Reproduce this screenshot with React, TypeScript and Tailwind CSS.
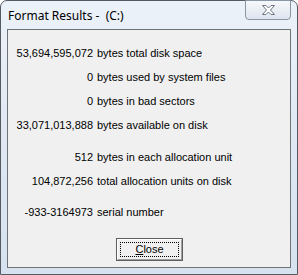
import React from "react";

const rows1 = [
  ["53,694,595,072", "bytes total disk space"],
  ["0", "bytes used by system files"],
  ["0", "bytes in bad sectors"],
  ["33,071,013,888", "bytes available on disk"],
];
const rows2 = [
  ["512", "bytes in each allocation unit"],
  ["104,872,256", "total allocation units on disk"],
];

function Row({ n, t }: { n: string; t: string }) {
  return (
    <div className="flex items-center h-[24px] text-[11px] text-black whitespace-nowrap">
      <div className="w-[85px] text-right">{n}</div>
      <div className="ml-[4px]">{t}</div>
    </div>
  );
}

export default function App() {
  return (
    <div
      className="w-[298px] h-[275px] bg-white overflow-hidden"
      style={{ fontFamily: '"Liberation Sans", Arial, sans-serif' }}
    >
      <div className="relative w-[298px] h-[275px] rounded-t-[7px] border border-[#555b63] bg-gradient-to-b from-[#ecf2f9] via-[#dfe8f3] to-[#d6e2ef] flex flex-col">
        {/* title bar */}
        <div className="h-[28px] flex items-start pl-[7px] pt-[7px]">
          <span
            className="text-[12px] leading-[16px] text-black"
            style={{ fontFamily: '"Noto Sans", "Open Sans", sans-serif' }}
          >
            Format Results -&nbsp; (C:)
          </span>
        </div>
        {/* close button */}
        <div className="absolute top-[-1px] right-[6px] w-[46px] h-[20px] rounded-b-[4px] border border-[#8a96a6] bg-gradient-to-b from-[#f6f8fb] to-[#dde5ef] flex items-center justify-center">
          <svg width="15" height="12" viewBox="0 0 15 12">
            <path
              d="M1.5 1.5 H5 L7.5 4 L10 1.5 H13.5 L9.5 6 L13.5 10.5 H10 L7.5 8 L5 10.5 H1.5 L5.5 6 Z"
              fill="#ffffff"
              stroke="#6d7480"
              strokeWidth="1"
              strokeLinejoin="round"
            />
          </svg>
        </div>
        {/* client */}
        <div className="mx-[6px] h-[239px] border border-[#6e7378] bg-[#f0f0f0] flex flex-col">
          <div className="h-[11px]" />
          {rows1.map(([n, t], i) => (
            <Row key={i} n={n} t={t} />
          ))}
          <div className="h-[8px]" />
          {rows2.map(([n, t], i) => (
            <Row key={i} n={n} t={t} />
          ))}
          <div className="h-[7px]" />
          <Row n="-933-3164973" t="serial number" />
          <div className="h-[14px]" />
          <div className="ml-[108px] w-[67px] h-[23px] border border-[#5e5e5e] bg-[#f0f0f0]">
            <div className="w-full h-full border border-t-white border-l-white border-r-[#a0a0a0] border-b-[#a0a0a0] p-[2px]">
              <div className="w-full h-full border border-dotted border-black flex items-center justify-center text-[11px] text-black">
                <span>
                  <span className="underline">C</span>lose
                </span>
              </div>
            </div>
          </div>
        </div>
      </div>
    </div>
  );
}
